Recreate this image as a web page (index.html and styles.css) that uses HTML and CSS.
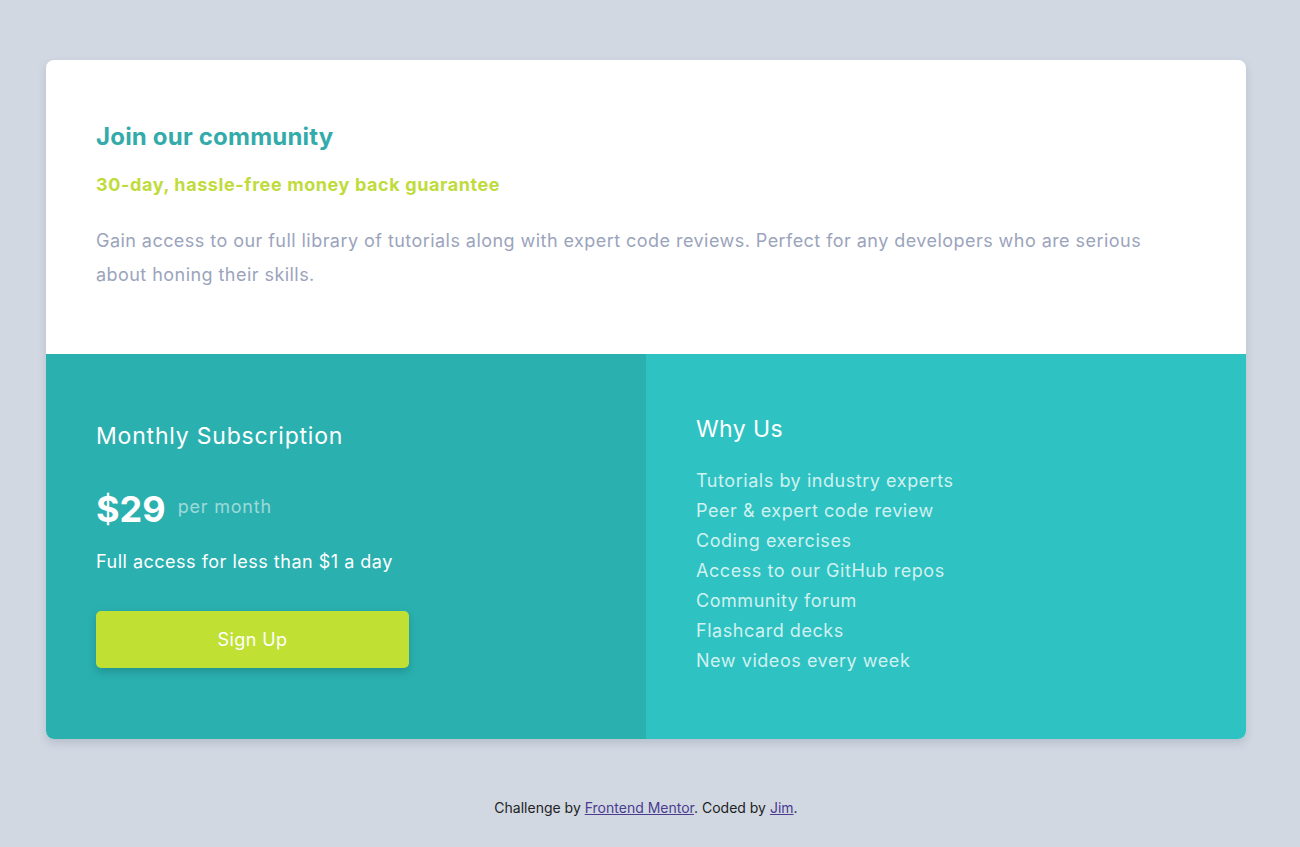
FILE: index.html
```html
<!DOCTYPE html>
<html lang="en">
<head>
<meta charset="utf-8">
<title>Single price grid</title>
<link rel="stylesheet" href="styles.css">
</head>
<body>
<main class="page">
  <article class="card">
    <section class="intro">
      <h1 class="intro-title">Join our community</h1>
      <h2 class="intro-sub">30-day, hassle-free money back guarantee</h2>
      <p class="intro-text">Gain access to our full library of tutorials along with expert code reviews. Perfect for any developers who are serious about honing their skills.</p>
    </section>
    <div class="plans">
      <section class="sub">
        <h3 class="sub-title">Monthly Subscription</h3>
        <div class="price"><span class="price-amount">$29</span><span class="price-unit">per month</span></div>
        <p class="sub-text">Full access for less than $1 a day</p>
        <button class="btn" type="button">Sign Up</button>
      </section>
      <section class="why">
        <h3 class="why-title">Why Us</h3>
        <ul class="why-list">
          <li>Tutorials by industry experts</li>
          <li>Peer &amp; expert code review</li>
          <li>Coding exercises</li>
          <li>Access to our GitHub repos</li>
          <li>Community forum</li>
          <li>Flashcard decks</li>
          <li>New videos every week</li>
        </ul>
      </section>
    </div>
  </article>
  <footer class="attribution">Challenge by <a href="#">Frontend Mentor</a>. Coded by <a href="#">Jim</a>.</footer>
</main>
</body>
</html>
```

FILE: styles.css
```css
* { box-sizing: border-box; }
html, body { margin: 0; padding: 0; }
body {
  background: #d1d8e2;
  font-family: "Inter", "Liberation Sans", sans-serif;
  color: #fff;
}
.page {
  padding: 60px 8px 0 0;
  display: flex;
  flex-direction: column;
  align-items: center;
}
.card {
  width: 1200px;
  border-radius: 8px;
  overflow: hidden;
  box-shadow: 0 4px 8px rgba(60, 80, 110, 0.18);
  background: #fff;
}
.intro {
  padding: 62px 50px 62px;
}
.intro-title {
  margin: 0;
  font-size: 24px;
  line-height: 30px;
  font-weight: 700;
  letter-spacing: 0.2px;
  color: #34abab;
}
.intro-sub {
  margin: 21px 0 0;
  font-size: 18px;
  line-height: 24px;
  font-weight: 700;
  letter-spacing: 0.6px;
  color: #bfdb3c;
}
.intro-text {
  margin: 27px 0 0;
  max-width: 1080px;
  font-size: 18px;
  line-height: 34px;
  letter-spacing: 0.45px;
  color: #9ba4bc;
}
.plans {
  display: grid;
  grid-template-columns: 1fr 1fr;
}
.sub {
  background: #2bb0b0;
  padding: 67px 50px 71px;
}
.sub-title {
  margin: 0;
  font-size: 23px;
  line-height: 30px;
  font-weight: 400;
  letter-spacing: 0.8px;
}
.price {
  margin-top: 38px;
  display: flex;
  align-items: center;
  gap: 12px;
  height: 40px;
}
.price-amount {
  font-size: 36px;
  font-weight: 700;
  line-height: 40px;
}
.price-unit {
  font-size: 18px;
  letter-spacing: 0.8px;
  color: rgba(255, 255, 255, 0.55);
  position: relative;
  top: -3px;
}
.sub-text {
  margin: 19px 0 0;
  font-size: 18px;
  line-height: 28px;
  letter-spacing: 0.5px;
}
.btn {
  margin-top: 35px;
  display: block;
  width: 313px;
  height: 57px;
  border: none;
  border-radius: 5px;
  background: #c0e033;
  color: #fff;
  font-family: inherit;
  font-size: 18px;
  letter-spacing: 0.4px;
  box-shadow: 0 4px 8px rgba(0, 60, 60, 0.25);
  cursor: pointer;
}
.why {
  background: #2ec3c2;
  padding: 60px 50px 63px;
}
.why-title {
  margin: 0;
  font-size: 23px;
  line-height: 30px;
  font-weight: 400;
  letter-spacing: 0.4px;
}
.why-list {
  margin: 22px 0 0;
  padding: 0;
  list-style: none;
  font-size: 18px;
  line-height: 30px;
  letter-spacing: 0.55px;
  color: rgba(255, 255, 255, 0.78);
}
.attribution {
  margin-top: 60px;
  font-size: 14px;
  line-height: 18px;
  color: #222;
  text-align: center;
}
.attribution a { color: #4b3c90; }
```
